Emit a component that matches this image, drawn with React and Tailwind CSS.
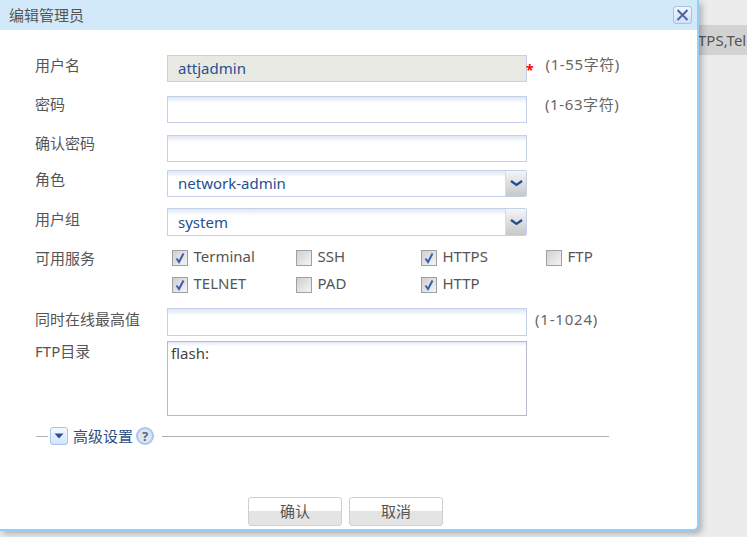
import React from "react";

const font = { fontFamily: '"Noto Sans", "Noto Sans CJK SC", sans-serif' };

function Label({ children, top = "" }) {
  return <div className={`w-[132px] shrink-0 text-[15px] leading-[20px] text-[#555] ${top}`}>{children}</div>;
}

function TextBox({ value, disabled }) {
  return (
    <div
      className={`w-[360px] h-full shrink-0 border border-[#c3d0e6] text-[15px] leading-[25px] pl-[10px] text-[#24508f] ${
        disabled ? "bg-[#e9e9e3]" : "bg-gradient-to-b from-[#dfe7f2] via-white via-[25%] to-white"
      }`}
    >
      {value}
    </div>
  );
}

function Select({ value, lead = "leading-[25px]" }) {
  return (
    <div className={`relative w-[360px] h-full shrink-0 border border-[#c3d0e6] rounded-r-[2px] text-[15px] ${lead} pl-[10px] text-[#24508f] bg-gradient-to-b from-[#dfe7f2] via-white via-[25%] to-white`}>
      {value}
      <div className="absolute right-0 top-0 bottom-0 w-[21px] border-l border-[#d5dde9] bg-gradient-to-b from-[#f4f5f6] to-[#c6c8ca] flex items-center justify-center">
        <svg width="13" height="7" viewBox="0 0 13 7">
          <path d="M1 1 L6.5 5 L12 1" fill="none" stroke="#1f4d8f" strokeWidth="2.2" />
        </svg>
      </div>
    </div>
  );
}

function Check({ label, checked }) {
  return (
    <div className="flex items-start h-[20px]">
      <div className="mt-[3px] w-[16px] h-[16px] shrink-0 border border-[#a0a0a0] bg-gradient-to-br from-[#d0d0d0] to-[#f4f4f4] flex items-center justify-center">
        {checked && (
          <svg width="12" height="12" viewBox="0 0 12 12">
            <path d="M2.5 6.5 L5 10 L9.5 1.5" fill="none" stroke="#3a5fb0" strokeWidth="2" />
          </svg>
        )}
      </div>
      <span className="ml-[5.5px] -mt-[1px] text-[15px] leading-[20px] text-[#555]">{label}</span>
    </div>
  );
}

function Hint({ children, className = "" }) {
  return <div className={`text-[15px] leading-[20px] tracking-[0.6px] text-[#666] ${className}`}>{children}</div>;
}

export default function App() {
  return (
    <div style={font} className="relative w-[747px] h-[537px] overflow-hidden bg-[#ececec]">
      <div className="mt-[25px] h-[30px] bg-[#d2d2d2] pl-[698px] text-[15px] leading-[30px] text-[#555] whitespace-nowrap">
        TPS,Tel
      </div>

      <div className="absolute left-0 top-0 w-[699px] h-[531px] bg-white border-r-2 border-b-2 border-[#92d0f7] rounded-br-[6px] shadow-[3px_3px_6px_rgba(0,0,0,0.25)] flex flex-col">
        <div className="h-[30px] shrink-0 bg-[#d2e9fa] flex items-center justify-between pl-[9px] pr-[5px]">
          <span className="text-[15px] text-[#555]">编辑管理员</span>
          <div className="w-[19px] h-[18px] rounded-[3px] border border-[#a9bfe3] bg-gradient-to-b from-[#f1f6fd] to-[#cfe0f8] flex items-center justify-center">
            <svg width="13" height="12" viewBox="0 0 13 12">
              <path d="M1.5 1 L11.5 11 M11.5 1 L1.5 11" stroke="#4a64a8" strokeWidth="2" />
            </svg>
          </div>
        </div>

        <div className="pl-[35px] flex flex-col flex-1">
          <div className="flex h-[27px] mt-[25px]">
            <Label>用户名</Label>
            <TextBox value="attjadmin" disabled />
            <span className="-ml-[1px] mt-[5px] text-[14px] leading-[20px] font-bold text-[#ff0000]">*</span>
            <Hint className="ml-[12px] -mt-[1px]">(1-55字符)</Hint>
          </div>
          <div className="flex h-[27px] mt-[14px]">
            <Label top="-mt-[2px]">密码</Label>
            <TextBox />
            <Hint className="ml-[18px] -mt-[2px]">(1-63字符)</Hint>
          </div>
          <div className="flex h-[27px] mt-[12px]">
            <Label top="-mt-[2px]">确认密码</Label>
            <TextBox />
          </div>
          <div className="flex h-[27px] mt-[8px]">
            <Label top="-mt-[1px]">角色</Label>
            <Select value="network-admin" />
          </div>
          <div className="flex h-[28px] mt-[11px]">
            <Label top="mt-[1px]">用户组</Label>
            <Select value="system" lead="leading-[27px]" />
          </div>
          <div className="flex mt-[11px]">
            <Label top="mt-[1px]">可用服务</Label>
            <div className="ml-[5px] grid grid-cols-[124px_125px_125px_auto] gap-y-[7px]">
              <Check label="Terminal" checked />
              <Check label="SSH" />
              <Check label="HTTPS" checked />
              <Check label="FTP" />
              <Check label="TELNET" checked />
              <Check label="PAD" />
              <Check label="HTTP" checked />
            </div>
          </div>
          <div className="flex h-[28px] mt-[14px]">
            <Label top="mt-[1px]">同时在线最高值</Label>
            <TextBox />
            <Hint className="ml-[8px] mt-[1px] tracking-[0.8px]">(1-1024)</Hint>
          </div>
          <div className="flex h-[75px] mt-[5px]">
            <Label>FTP目录</Label>
            <div className="w-[360px] h-full border border-[#b5b9cf] text-[15px] leading-[20px] pl-[3px] pt-[1px] text-[#444] bg-gradient-to-b from-[#e2e9f3] via-white via-[6%] to-white">
              flash:
            </div>
          </div>
          <div className="flex items-center h-[20px] mt-[10px]">
            <div className="ml-[1px] w-[12px] h-px bg-[#b0b0b8]" />
            <div className="ml-[2px] w-[18px] h-[18px] rounded-[3px] border border-[#a5c5ef] bg-gradient-to-b from-[#f5f9fe] to-[#d3e4f9] flex items-center justify-center">
              <svg width="10" height="6" viewBox="0 0 10 6"><path d="M0.5 0.5 H9.5 L5 5.5 Z" fill="#2c4f96" /></svg>
            </div>
            <span className="ml-[5px] text-[15px] text-[#2d4f86] whitespace-nowrap">高级设置</span>
            <div className="ml-[3px] w-[18px] h-[18px] rounded-full border-2 border-[#a9c6ee] bg-[#dfe5ee] flex items-center justify-center text-[13px] leading-none font-bold text-[#56678a]">?</div>
            <div className="ml-[8px] w-[447px] h-px bg-[#b0b0b8]" />
          </div>
          <div className="flex mt-[51px] pl-[213px] gap-[7px]">
            <button className="w-[94px] h-[29px] rounded-[3px] border border-[#cfcfcf] bg-gradient-to-b from-white from-50% to-[#e4e4e4] to-50% text-[15px] leading-[27px] text-[#555]">确认</button>
            <button className="w-[94px] h-[29px] rounded-[3px] border border-[#cfcfcf] bg-gradient-to-b from-white from-50% to-[#e4e4e4] to-50% text-[15px] leading-[27px] text-[#555]">取消</button>
          </div>
        </div>
      </div>
    </div>
  );
}
